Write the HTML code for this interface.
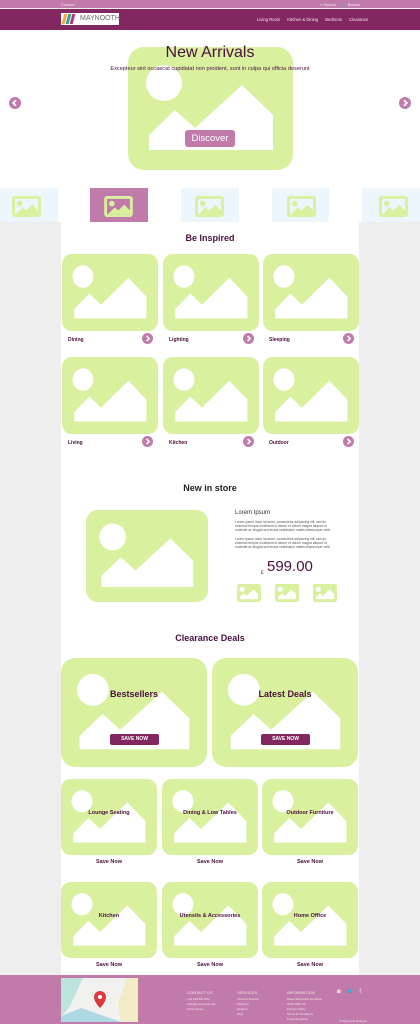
<!DOCTYPE html>
<html><head><meta charset="utf-8">
<style>
*{margin:0;padding:0;box-sizing:border-box}
body{width:420px;height:1024px;position:relative;overflow:hidden;background:#eeeeee;font-family:"Liberation Sans",sans-serif;color:#4a1040}
.a{position:absolute}
.c{text-align:center}
svg{display:block}
.lbl{font-size:5px;font-weight:bold;color:#4a1040}
.ft{font-size:3px;color:#f4e4ef;line-height:5px}
.fh{font-size:4px;color:#f4e4ef;margin-bottom:2px}
</style></head><body>
<svg width="0" height="0" style="position:absolute">
<defs>
<symbol id="im" viewBox="0 0 165 123" preserveAspectRatio="none">
<rect width="165" height="123" rx="16" fill="#d9f09f"/>
<circle cx="36" cy="36" r="18" fill="#fff"/>
<polygon points="21,88 47,63 67,81 114,38 145,68 145,103 21,103" fill="#fff"/>
</symbol>
<symbol id="sm" viewBox="0 0 30 22" preserveAspectRatio="none">
<rect width="30" height="22" rx="3" fill="#d9f09f"/>
<rect x="3" y="3" width="24" height="16" fill="#eef6fd"/>
<circle cx="8" cy="8" r="3" fill="#d9f09f"/>
<polygon points="4,19 11,12 15,15 21,9 27,15 27,19" fill="#d9f09f"/>
</symbol>
<symbol id="ar" viewBox="0 0 12 12">
<circle cx="6" cy="6" r="6" fill="#c17bab"/>
<path d="M5 3.2L7.8 6L5 8.8" stroke="#fff" stroke-width="1.8" fill="none"/>
</symbol>
<symbol id="al" viewBox="0 0 12 12">
<circle cx="6" cy="6" r="6" fill="#c17bab"/>
<path d="M7 3.2L4.2 6L7 8.8" stroke="#fff" stroke-width="1.8" fill="none"/>
</symbol>
</defs></svg>

<!-- top bar -->
<div class="a" style="left:0;top:0;width:420px;height:8px;background:#c17bab"></div>
<div class="a" style="left:61px;top:2px;font-size:4px;color:#f5e6f0">Contact</div>
<div class="a" style="left:320px;top:2px;font-size:4px;color:#f5e6f0">⌕ Search &nbsp;&nbsp;&nbsp; 🛒 Basket</div>
<div class="a" style="left:0;top:9px;width:420px;height:21px;background:#82275f"></div>
<div class="a" style="left:61px;top:13px;width:58px;height:12px;background:#fff"></div>
<div class="a" style="left:63px;top:14px;width:3px;height:10px;background:#f1a93b;transform:skewX(-15deg)"></div>
<div class="a" style="left:67px;top:14px;width:3px;height:10px;background:#2aa59a;transform:skewX(-15deg)"></div>
<div class="a" style="left:71px;top:14px;width:3px;height:10px;background:#b8307c;transform:skewX(-15deg)"></div>
<div class="a" style="left:80px;top:15px;font-size:7px;color:#666">MAYNOOTH</div>
<div class="a" style="left:257px;top:17px;font-size:4.2px;color:#f5e6f0">Living Room&nbsp;&nbsp;&nbsp;&nbsp;&nbsp; Kitchen &amp; Dining&nbsp;&nbsp;&nbsp;&nbsp;&nbsp; Bedroom&nbsp;&nbsp;&nbsp;&nbsp;&nbsp; Clearance</div>

<!-- hero -->
<div class="a" style="left:0;top:30px;width:420px;height:192px;background:#fff"></div>
<svg class="a" style="left:128px;top:47px" width="165" height="123"><use href="#im"/></svg>
<div class="a c" style="left:0;top:44px;width:420px;font-size:16px;color:#4a1040">New Arrivals</div>
<div class="a c" style="left:0;top:66px;width:420px;font-size:5.6px;color:#4a1040">Excepteur sint occaecat cupidatat non proident, sunt in culpa qui officia deserunt</div>
<div class="a c" style="left:185px;top:130px;width:50px;height:17px;background:#c17bab;border-radius:3px;color:#fff;font-size:9.5px;line-height:17px">Discover</div>
<svg class="a" style="left:9px;top:97px" width="12" height="12"><use href="#al"/></svg>
<svg class="a" style="left:399px;top:97px" width="12" height="12"><use href="#ar"/></svg>

<!-- thumbs -->
<div class="a" style="left:0;top:188px;width:58px;height:34px;background:#eef6fd"></div>
<div class="a" style="left:90px;top:188px;width:58px;height:34px;background:#c17bab"></div>
<div class="a" style="left:181px;top:188px;width:58px;height:34px;background:#eef6fd"></div>
<div class="a" style="left:272px;top:188px;width:57px;height:34px;background:#eef6fd"></div>
<div class="a" style="left:362px;top:188px;width:58px;height:34px;background:#eef6fd"></div>
<svg class="a" style="left:12px;top:196px" width="29" height="21"><use href="#sm"/></svg>
<svg class="a" style="left:104px;top:196px" width="29" height="21" viewBox="0 0 30 22"><rect width="30" height="22" rx="3" fill="#d9f09f"/><rect x="3" y="3" width="24" height="16" fill="#c17bab"/><circle cx="8" cy="8" r="3" fill="#d9f09f"/><polygon points="4,19 11,12 15,15 21,9 27,15 27,19" fill="#d9f09f"/></svg>
<svg class="a" style="left:195px;top:196px" width="29" height="21"><use href="#sm"/></svg>
<svg class="a" style="left:287px;top:196px" width="29" height="21"><use href="#sm"/></svg>
<svg class="a" style="left:379px;top:196px" width="29" height="21"><use href="#sm"/></svg>

<!-- main column -->
<div class="a" style="left:61px;top:222px;width:298px;height:753px;background:#fff"></div>
<div class="a c" style="left:0;top:233px;width:420px;font-size:9px;font-weight:bold">Be Inspired</div>

<svg class="a" style="left:62px;top:254px" width="96" height="77"><use href="#im"/></svg>
<svg class="a" style="left:163px;top:254px" width="96" height="77"><use href="#im"/></svg>
<svg class="a" style="left:263px;top:254px" width="96" height="77"><use href="#im"/></svg>
<svg class="a" style="left:62px;top:357px" width="96" height="77"><use href="#im"/></svg>
<svg class="a" style="left:163px;top:357px" width="96" height="77"><use href="#im"/></svg>
<svg class="a" style="left:263px;top:357px" width="96" height="77"><use href="#im"/></svg>
<div class="a lbl" style="left:68px;top:337px">Dining</div>
<div class="a lbl" style="left:169px;top:337px">Lighting</div>
<div class="a lbl" style="left:269px;top:337px">Sleeping</div>
<div class="a lbl" style="left:68px;top:440px">Living</div>
<div class="a lbl" style="left:169px;top:440px">Kitchen</div>
<div class="a lbl" style="left:269px;top:440px">Outdoor</div>
<svg class="a" style="left:142px;top:333px" width="11" height="11"><use href="#ar"/></svg>
<svg class="a" style="left:243px;top:333px" width="11" height="11"><use href="#ar"/></svg>
<svg class="a" style="left:343px;top:333px" width="11" height="11"><use href="#ar"/></svg>
<svg class="a" style="left:142px;top:436px" width="11" height="11"><use href="#ar"/></svg>
<svg class="a" style="left:243px;top:436px" width="11" height="11"><use href="#ar"/></svg>
<svg class="a" style="left:343px;top:436px" width="11" height="11"><use href="#ar"/></svg>

<!-- new in store -->
<div class="a c" style="left:0;top:483px;width:420px;font-size:9px;font-weight:bold;color:#222">New in store</div>
<svg class="a" style="left:86px;top:510px" width="122" height="92"><use href="#im"/></svg>
<div class="a" style="left:235px;top:510px;font-size:6px;color:#333">Lorem Ipsum</div>
<div class="a" style="left:235px;top:520px;width:104px;font-size:3.3px;line-height:4.2px;color:#555">Lorem ipsum dolor sit amet, consectetur adipiscing elit, sed do eiusmod tempor incididunt ut labore et dolore magna aliqua! Ut molestie ac feugiat sed lectus vestibulum mattis ullamcorper velit.<br><br>Lorem ipsum dolor sit amet, consectetur adipiscing elit, sed do eiusmod tempor incididunt ut labore et dolore magna aliqua! Ut molestie ac feugiat sed lectus vestibulum mattis ullamcorper velit.</div>
<div class="a" style="left:261px;top:570px;font-size:5px;color:#4a1040">£</div>
<div class="a" style="left:267px;top:558px;font-size:15px;color:#4a1040">599.00</div>
<svg class="a" style="left:237px;top:584px" width="24" height="18"><use href="#im"/></svg>
<svg class="a" style="left:275px;top:584px" width="24" height="18"><use href="#im"/></svg>
<svg class="a" style="left:313px;top:584px" width="24" height="18"><use href="#im"/></svg>

<!-- clearance -->
<div class="a c" style="left:0;top:633px;width:420px;font-size:9px;font-weight:bold">Clearance Deals</div>
<svg class="a" style="left:61px;top:658px" width="146" height="109"><use href="#im"/></svg>
<svg class="a" style="left:212px;top:658px" width="146" height="109"><use href="#im"/></svg>
<div class="a c" style="left:61px;top:689px;width:146px;font-size:9px;font-weight:bold">Bestsellers</div>
<div class="a c" style="left:212px;top:689px;width:146px;font-size:9px;font-weight:bold">Latest Deals</div>
<div class="a c" style="left:110px;top:734px;width:49px;height:11px;background:#82275f;border-radius:2px;color:#fff;font-size:5px;font-weight:bold;line-height:11px">SAVE NOW</div>
<div class="a c" style="left:261px;top:734px;width:49px;height:11px;background:#82275f;border-radius:2px;color:#fff;font-size:5px;font-weight:bold;line-height:11px">SAVE NOW</div>

<svg class="a" style="left:61px;top:779px" width="96" height="76"><use href="#im"/></svg>
<svg class="a" style="left:162px;top:779px" width="96" height="76"><use href="#im"/></svg>
<svg class="a" style="left:262px;top:779px" width="96" height="76"><use href="#im"/></svg>
<div class="a c lbl" style="left:61px;top:810px;width:96px;font-size:5.5px">Lounge Seating</div>
<div class="a c lbl" style="left:162px;top:810px;width:96px;font-size:5.5px">Dining &amp; Low Tables</div>
<div class="a c lbl" style="left:262px;top:810px;width:96px;font-size:5.5px">Outdoor Furniture</div>
<div class="a c lbl" style="left:61px;top:859px;width:96px;font-size:5.5px">Save Now</div>
<div class="a c lbl" style="left:162px;top:859px;width:96px;font-size:5.5px">Save Now</div>
<div class="a c lbl" style="left:262px;top:859px;width:96px;font-size:5.5px">Save Now</div>

<svg class="a" style="left:61px;top:882px" width="96" height="76"><use href="#im"/></svg>
<svg class="a" style="left:162px;top:882px" width="96" height="76"><use href="#im"/></svg>
<svg class="a" style="left:262px;top:882px" width="96" height="76"><use href="#im"/></svg>
<div class="a c lbl" style="left:61px;top:913px;width:96px;font-size:5.5px">Kitchen</div>
<div class="a c lbl" style="left:162px;top:913px;width:96px;font-size:5.5px">Utensils &amp; Accessories</div>
<div class="a c lbl" style="left:262px;top:913px;width:96px;font-size:5.5px">Home Office</div>
<div class="a c lbl" style="left:61px;top:962px;width:96px;font-size:5.5px">Save Now</div>
<div class="a c lbl" style="left:162px;top:962px;width:96px;font-size:5.5px">Save Now</div>
<div class="a c lbl" style="left:262px;top:962px;width:96px;font-size:5.5px">Save Now</div>

<!-- footer -->
<div class="a" style="left:0;top:975px;width:420px;height:49px;background:#c17bab"></div>
<svg class="a" style="left:61px;top:978px" width="77" height="44" viewBox="0 0 77 44">
<rect width="77" height="44" fill="#f1f1f0"/>
<polygon points="0,0 22,0 8,30 0,38" fill="#bde3de"/>
<polygon points="66,0 77,0 77,44 60,44 57,25" fill="#f1ebc6"/>
<polygon points="0,38 20,30 60,44 0,44" fill="#add9e3"/>
<path d="M39 13a6 6 0 0 1 6 6c0 5-6 11-6 11s-6-6-6-11a6 6 0 0 1 6-6z" fill="#e0383a"/>
<circle cx="39" cy="19" r="2" fill="#fff"/>
</svg>
<div class="a" style="left:187px;top:990px"><div class="fh">CONTACT US</div><div class="ft">+44 183 833 832<br>hello@maynooth.com<br>Find a Store</div></div>
<div class="a" style="left:237px;top:990px"><div class="fh">SERVICES</div><div class="ft">Interiors Planner<br>Shipping<br>Returns<br>FAQ</div></div>
<div class="a" style="left:287px;top:990px"><div class="fh">INFORMATION</div><div class="ft">About Maynooth Furniture<br>Work With Us<br>Privacy Policy<br>Terms &amp; Conditions<br>Press Enquiries</div></div>
<div class="a" style="left:337px;top:988px;font-size:6px;color:#f4e4ef;letter-spacing:2px">◙ 🐦 f</div>
<div class="a" style="left:339px;top:1019px;font-size:3px;color:#f4e4ef">© Maynooth Designs</div>
</body></html>
